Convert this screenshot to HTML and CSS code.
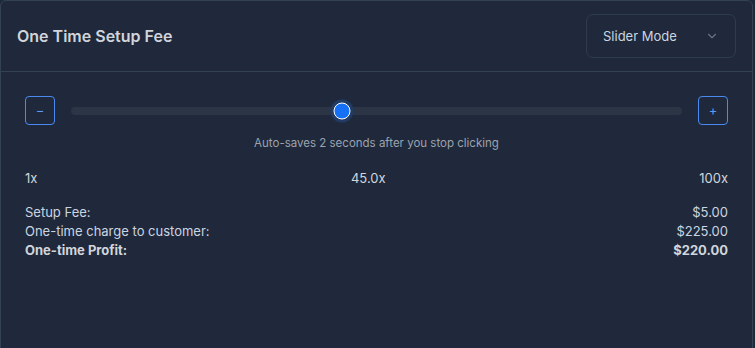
FILE: index.html
```html
<!DOCTYPE html>
<html lang="en">
<head>
    <meta charset="UTF-8">
    <meta name="viewport" content="width=device-width, initial-scale=1.0">
    <title>One Time Setup Fee</title>
    <link rel="stylesheet" href="styles.css">
</head>
<body>
    <section class="fee-card">
        <div class="fee-header">
            <h2>One Time Setup Fee</h2>
            <button class="mode-select">
                <span>Slider Mode</span>
                <svg width="14" height="14" viewBox="0 0 24 24" fill="none" stroke="currentColor" stroke-width="2" stroke-linecap="round" stroke-linejoin="round"><path d="M6 9l6 6 6-6"/></svg>
            </button>
        </div>

        <div class="fee-body">
            <!-- slider -->
            <div class="slider-row">
                <button class="step-btn">&minus;</button>
                <div class="track">
                    <span class="thumb" style="left: 44.4%"></span>
                </div>
                <button class="step-btn">+</button>
            </div>
            <p class="note">Auto-saves 2 seconds after you stop clicking</p>

            <div class="scale">
                <span>1x</span>
                <span>45.0x</span>
                <span>100x</span>
            </div>

            <!-- totals -->
            <div class="totals">
                <div class="line"><span>Setup Fee:</span><span>$5.00</span></div>
                <div class="line"><span>One-time charge to customer:</span><span>$225.00</span></div>
                <div class="line profit"><span>One-time Profit:</span><span>$220.00</span></div>
            </div>
        </div>
    </section>
</body>
</html>
```

FILE: styles.css
```css
body {
    margin: 0;
    padding: 0;
    background-color: #1e293a;
    font-family: Inter, "Noto Sans", Arial, sans-serif;
}

.fee-card {
    width: 751px;
    height: 360px;
    background-color: #1f293b;
    border: 1px solid #334155;
    border-radius: 6px;
    color: #cbd5e1;
}

.fee-header {
    display: flex;
    justify-content: space-between;
    align-items: center;
    height: 70px;
    padding: 0 16px;
    border-bottom: 1px solid #334155;
}

.fee-header h2 {
    margin: 0;
    font-size: 16px;
    font-weight: 600;
    color: #d1d5db;
}

.mode-select {
    display: flex;
    align-items: center;
    justify-content: space-between;
    width: 150px;
    height: 44px;
    padding: 0 16px;
    background: transparent;
    border: 1px solid #2f3b4f;
    border-radius: 7px;
    font-family: inherit;
    font-size: 13px;
    color: #cbd5e1;
}

.mode-select svg {
    color: #6b7280;
}

.fee-body {
    padding: 24px 24px 0;
}

.slider-row {
    display: flex;
    align-items: center;
    gap: 16px;
}

.step-btn {
    width: 30px;
    height: 29px;
    padding: 0;
    background: transparent;
    border: 1px solid #4a8af0;
    border-radius: 4px;
    color: #5b9af5;
    font-family: inherit;
    font-size: 13px;
    line-height: 1;
}

.track {
    position: relative;
    flex: 1;
    height: 8px;
    border-radius: 4px;
    background-color: #2c3546;
}

.thumb {
    position: absolute;
    top: 50%;
    width: 15px;
    height: 15px;
    border-radius: 50%;
    background-color: #1670f5;
    border: 1.5px solid #ffffff;
    box-shadow: 0 0 0 3px #213b63;
    transform: translate(-50%, -50%);
}

.note {
    margin: 10px 0 0;
    font-size: 11.5px;
    line-height: 16px;
    color: #9ca3af;
    text-align: center;
}

.scale {
    display: flex;
    justify-content: space-between;
    margin-top: 17px;
    font-size: 13px;
    line-height: 20px;
    color: #d1d5db;
}

.totals {
    margin-top: 15px;
}

.line {
    display: flex;
    justify-content: space-between;
    font-size: 13px;
    line-height: 19px;
}

.line.profit {
    font-weight: 700;
    color: #d1d5db;
}
```
